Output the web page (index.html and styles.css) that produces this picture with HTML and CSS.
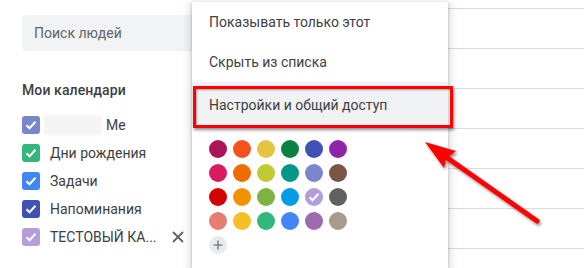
FILE: index.html
```html
<!DOCTYPE html>
<html lang="ru">
<head>
<meta charset="utf-8">
<link rel="stylesheet" href="styles.css">
</head>
<body>
<div class="page">
  <aside class="sidebar">
    <div class="search">Поиск людей</div>
    <div class="heading">Мои календари</div>
    <ul class="cals">
      <li class="row"><span class="cb c-lav"><svg viewBox="0 0 18 18"><path d="M4.5 9.2l3 3 6-6.4"/></svg></span><span class="blur"></span><span class="me">Me</span></li>
      <li class="row"><span class="cb c-sage"><svg viewBox="0 0 18 18"><path d="M4.5 9.2l3 3 6-6.4"/></svg></span><span>Дни рождения</span></li>
      <li class="row"><span class="cb c-cobalt"><svg viewBox="0 0 18 18"><path d="M4.5 9.2l3 3 6-6.4"/></svg></span><span>Задачи</span></li>
      <li class="row"><span class="cb c-blue"><svg viewBox="0 0 18 18"><path d="M4.5 9.2l3 3 6-6.4"/></svg></span><span>Напоминания</span></li>
      <li class="row"><span class="cb c-wist"><svg viewBox="0 0 18 18"><path d="M4.5 9.2l3 3 6-6.4"/></svg></span><span>ТЕСТОВЫЙ КА...</span><svg class="close" viewBox="0 0 12 12"><path d="M1 1l10 10M11 1L1 11"/></svg></li>
    </ul>
  </aside>
  <main class="grid">
    <div class="cell"></div><div class="cell"></div><div class="cell"></div><div class="cell"></div><div class="cell"></div><div class="cell"></div><div class="cell last"></div>
  </main>
</div>

<div class="menu">
  <div class="item">Показывать только этот</div>
  <div class="item">Скрыть из списка</div>
  <div class="item active">Настройки и общий доступ</div>
  <div class="palette">
    <span class="dot" style="background:#ad1457"></span>
    <span class="dot" style="background:#f4511e"></span>
    <span class="dot" style="background:#e4c441"></span>
    <span class="dot" style="background:#0b8043"></span>
    <span class="dot" style="background:#3f51b5"></span>
    <span class="dot" style="background:#8e24aa"></span>
    <span class="dot" style="background:#d81b60"></span>
    <span class="dot" style="background:#ef6c00"></span>
    <span class="dot" style="background:#c0ca33"></span>
    <span class="dot" style="background:#009688"></span>
    <span class="dot" style="background:#7986cb"></span>
    <span class="dot" style="background:#795548"></span>
    <span class="dot" style="background:#d50000"></span>
    <span class="dot" style="background:#f09300"></span>
    <span class="dot" style="background:#7cb342"></span>
    <span class="dot" style="background:#039be5"></span>
    <span class="dot" style="background:#b39ddb"><svg viewBox="0 0 18 18"><path d="M4.5 9.2l3 3 6-6.4"/></svg></span>
    <span class="dot" style="background:#616161"></span>
    <span class="dot" style="background:#e67c73"></span>
    <span class="dot" style="background:#f6bf26"></span>
    <span class="dot" style="background:#33b679"></span>
    <span class="dot" style="background:#4285f4"></span>
    <span class="dot" style="background:#9e69af"></span>
    <span class="dot" style="background:#a79b8e"></span>
    <span class="dot add"><svg viewBox="0 0 18 18"><path d="M9 4.5v9M4.5 9h9"/></svg></span>
  </div>
</div>

<div class="redbox"></div>

<svg class="arrow" viewBox="0 0 584 268">
  <defs>
    <filter id="sh" x="-20%" y="-20%" width="140%" height="140%">
      <feDropShadow dx="1.5" dy="2" stdDeviation="1.5" flood-color="#000" flood-opacity="0.45"/>
    </filter>
  </defs>
  <g filter="url(#sh)">
    <line x1="537" y1="221" x2="446" y2="157" stroke="#f00" stroke-width="5" stroke-linecap="round"/>
    <polygon points="425,142 456,151 446,159 444,168" fill="#f00"/>
  </g>
</svg>
</body>
</html>
```

FILE: styles.css
```css
* { box-sizing: border-box; }
html, body {
  margin: 0;
  padding: 0;
  width: 584px;
  height: 268px;
  overflow: hidden;
  background: #fff;
  font-family: Roboto, "Noto Sans", "Liberation Sans", sans-serif;
}
.page {
  display: flex;
  width: 584px;
  height: 268px;
  overflow: hidden;
}
.sidebar {
  width: 192px;
  flex: none;
  padding: 15px 0 0 22px;
}
.search {
  width: 190px;
  height: 36px;
  background: #f1f3f4;
  border-radius: 4px;
  padding-left: 12px;
  display: flex;
  align-items: center;
  font-size: 14px;
  color: #5f6368;
}
.heading {
  margin-top: 29px;
  line-height: 20px;
  font-size: 14px;
  font-weight: 500;
  color: #3c4043;
  letter-spacing: 0.1px;
}
.cals {
  list-style: none;
  margin: 11px 0 0;
  padding: 0;
}
.row {
  display: flex;
  align-items: center;
  height: 28px;
  width: 162px;
  font-size: 14px;
  color: #3c4043;
}
.cb {
  width: 18px;
  height: 18px;
  border-radius: 3px;
  margin-right: 10px;
  flex: none;
  display: flex;
}
.cb svg, .dot svg {
  width: 18px;
  height: 18px;
  fill: none;
  stroke: #fff;
  stroke-width: 2;
}
.c-lav { background: #7986cb; }
.c-sage { background: #33b679; }
.c-cobalt { background: #4285f4; }
.c-blue { background: #3f51b5; }
.c-wist { background: #b39ddb; }
.blur {
  width: 56px;
  height: 18px;
  margin-left: -5px;
  background: #f4f4f5;
  box-shadow: 0 0 3px 1px #f4f4f5;
}
.me { margin-left: 5px; }
.close {
  margin-left: auto;
  width: 12px;
  height: 12px;
  fill: none;
  stroke: #5f6368;
  stroke-width: 1.8;
}
.grid {
  flex: 1;
  padding-top: 8px;
}
.cell {
  height: 40px;
  border-top: 1px solid #dadce0;
}
.cell.last { height: 20px; }
.menu {
  position: absolute;
  left: 192px;
  top: 2px;
  width: 256px;
  height: 266px;
  background: #fff;
  box-shadow: 0 1px 3px rgba(60,64,67,.3), 0 4px 8px 3px rgba(60,64,67,.15);
}
.item {
  height: 40px;
  padding-left: 17px;
  display: flex;
  align-items: center;
  font-size: 14px;
  color: #3c4043;
}
.item.active {
  height: 44px;
  padding-top: 2px;
  background: #f1f2f4;
}
.palette {
  display: grid;
  grid-template-columns: repeat(6, 18px);
  gap: 6px;
  padding: 14px 0 0 17px;
}
.dot {
  width: 18px;
  height: 18px;
  border-radius: 50%;
  display: flex;
}
.dot.add {
  background: #e8eaed;
}
.dot.add svg {
  stroke: #80868b;
  stroke-width: 1.6;
}
.redbox {
  position: absolute;
  left: 193px;
  top: 86px;
  width: 260px;
  height: 42px;
  border: 3px solid #f00;
  box-shadow: 1px 2px 3px rgba(0,0,0,.45), inset 1px 1px 2px rgba(0,0,0,.35);
}
.arrow {
  position: absolute;
  left: 0;
  top: 0;
  width: 584px;
  height: 268px;
}
```
